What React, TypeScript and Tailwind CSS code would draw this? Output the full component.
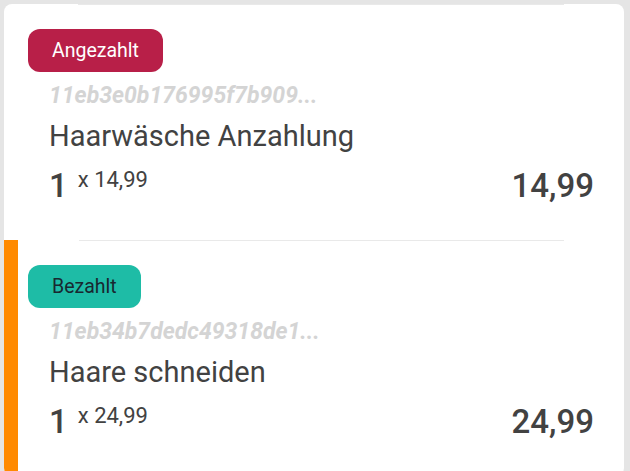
import React from 'react';

interface Position {
  status: 'Angezahlt' | 'Bezahlt';
  hash: string;
  title: string;
  qty: number;
  price: string;
  highlighted?: boolean;
}

const positions: Position[] = [
  {
    status: 'Angezahlt',
    hash: '11eb3e0b176995f7b909...',
    title: 'Haarwäsche Anzahlung',
    qty: 1,
    price: '14,99',
  },
  {
    status: 'Bezahlt',
    hash: '11eb34b7dedc49318de1...',
    title: 'Haare schneiden',
    qty: 1,
    price: '24,99',
    highlighted: true,
  },
];

const StatusBadge: React.FC<{ status: Position['status'] }> = ({ status }) => (
  <span
    className={`inline-flex h-[43px] items-center rounded-xl px-6 text-[19.5px] leading-none ${
      status === 'Bezahlt' ? 'bg-[#1ebca6] text-[#182830]' : 'bg-[#b81f48] text-white'
    }`}
  >
    {status}
  </span>
);

const PositionRow: React.FC<{ item: Position }> = ({ item }) => (
  <div className={item.highlighted ? 'border-l-[14px] border-[#ff8a00]' : ''}>
    <div className={`h-px bg-[#e9e9e9] mr-[60px] ${item.highlighted ? 'ml-[61px]' : 'ml-[74px]'}`} />
    <div className={`pt-6 pb-[34px] pr-[30px] ${item.highlighted ? 'pl-[10px]' : 'pl-6'}`}>
      <StatusBadge status={item.status} />
      <div className="ml-[21px]">
        <p className="mt-[11px] text-[23px] leading-[26px] font-bold italic text-[#d4d4d4]">{item.hash}</p>
        <p className="mt-[10px] text-[29px] leading-[35px] text-[#424242]">{item.title}</p>
        <div className="mt-3 flex h-[40px] items-baseline justify-between text-[#424242]">
          <span className="text-[33px] leading-[40px] font-medium">
            {item.qty}
            <span className="ml-[10px] align-[10px] text-[22px] leading-none font-normal">x {item.price}</span>
          </span>
          <span className="text-[33px] leading-[40px] font-medium">{item.price}</span>
        </div>
      </div>
    </div>
  </div>
);

export default function App() {
  return (
    <div
      className="min-h-screen bg-[#e5e5e5] pt-1 pl-1 pr-[6px]"
      style={{ fontFamily: 'Roboto, "Noto Sans", sans-serif' }}
    >
      <div className="rounded-lg bg-white overflow-hidden">
        {positions.map((p) => (
          <PositionRow key={p.hash} item={p} />
        ))}
      </div>
    </div>
  );
}
